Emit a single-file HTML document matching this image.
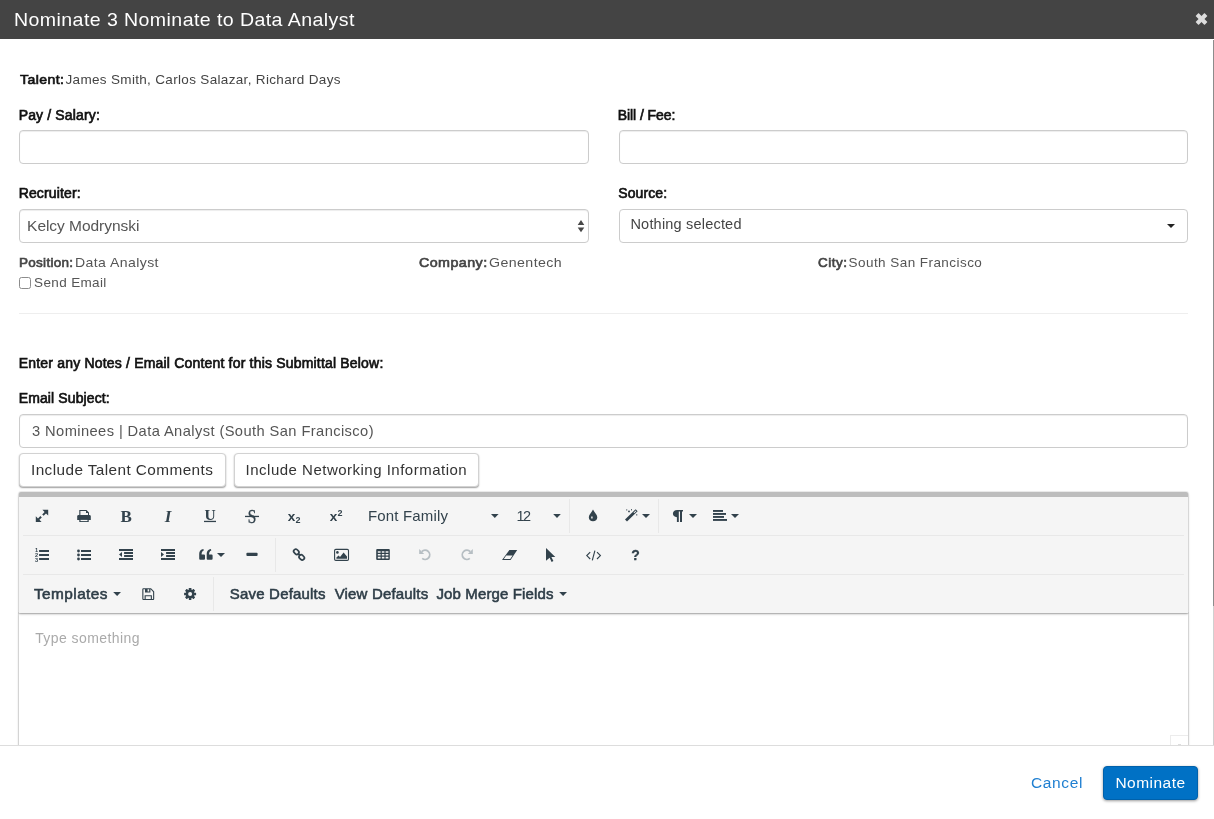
<!DOCTYPE html>
<html lang="en">
<head>
<meta charset="utf-8">
<title>Nominate 3 Nominate to Data Analyst</title>
<style>
html,body{margin:0;padding:0;background:#fff}
body{width:1214px;height:819px;position:relative;overflow:hidden;font-family:"Liberation Sans",sans-serif}
.abs{position:absolute}
.t{position:absolute;white-space:nowrap;line-height:1;will-change:opacity}
.hdr{left:0;top:0;width:1214px;height:39px;background:#444}
.inp{position:absolute;box-sizing:border-box;border:1px solid #ccc;border-radius:4px;background:#fff;box-shadow:inset 0 1px 1px rgba(0,0,0,.075)}
.btn{position:absolute;box-sizing:border-box;border:1px solid #d2d2d2;border-radius:4px;background:#fff;box-shadow:0 1px 1.5px rgba(0,0,0,.38)}
.ic{position:absolute;overflow:visible}
.g{transform:translateX(-50%)}
.sep{position:absolute;background:#e8e8e8}
</style>
</head>
<body>
<div class="abs hdr"></div>
<svg class="ic" style="left:1195px;top:13px" width="12" height="12" viewBox="0 0 12 12"><g fill="#ddd" transform="translate(6.5 6)"><rect x="-6.3" y="-2.1" width="12.6" height="4.2" rx="0.4" transform="rotate(45)"/><rect x="-6.3" y="-2.1" width="12.6" height="4.2" rx="0.4" transform="rotate(-45)"/></g></svg>
<!-- scrollbar -->
<div class="abs" style="left:1213px;top:40px;width:1px;height:566px;background:#8c8c8c"></div>
<div class="abs" style="left:1213px;top:606px;width:1px;height:139px;background:#d0d0d0"></div>

<div class="inp" style="left:19px;top:130px;width:569.5px;height:34px"></div>
<div class="inp" style="left:618.5px;top:130px;width:569.5px;height:34px"></div>
<div class="inp" style="left:19px;top:209px;width:569.5px;height:34px"></div>
<div class="inp" style="left:618.5px;top:209px;width:569.5px;height:34px;box-shadow:none"></div>
<!-- select arrows -->
<svg class="ic" style="left:576.7px;top:219.7px" width="8" height="13" viewBox="0 0 8 13"><path d="M4 0 L7.3 5.1 H0.7 Z M4 12.2 L7.3 7.5 H0.7 Z" fill="#484848"/></svg>
<svg class="ic" style="left:1167px;top:224px" width="8" height="4" viewBox="0 0 8 4"><path d="M0 0 H8 L4 4 Z" fill="#222"/></svg>
<!-- checkbox -->
<div class="abs" style="left:19px;top:277px;width:12px;height:12px;box-sizing:border-box;border:1px solid #8c8c8c;border-radius:2.5px;background:#fff"></div>
<!-- hr -->
<div class="abs" style="left:19px;top:313px;width:1169px;height:1px;background:#eee"></div>
<div class="inp" style="left:19px;top:414px;width:1169px;height:34px"></div>
<div class="btn" style="left:19px;top:453px;width:206.5px;height:34px"></div>
<div class="btn" style="left:234px;top:453px;width:245px;height:34px"></div>

<!-- editor -->
<div class="abs" style="left:19px;top:613px;width:1169px;height:140px;background:#fff;box-shadow:0 1px 3px rgba(0,0,0,.12),0 1px 2px rgba(0,0,0,.24),0 0 0 1px rgba(0,0,0,.06)"></div>
<div class="abs" style="left:19px;top:492px;width:1169px;height:121px;background:#f5f5f5;border-top:5px solid #bdbdbd;border-radius:2px 2px 0 0;box-sizing:border-box;box-shadow:0 1px 3px rgba(0,0,0,.12),0 1px 2px rgba(0,0,0,.24),0 0 0 1px rgba(0,0,0,.06)"></div>
<div class="sep" style="left:23px;top:535px;width:1161px;height:1px"></div>
<div class="sep" style="left:23px;top:574px;width:1161px;height:1px"></div>
<div class="sep" style="left:569px;top:499px;width:1px;height:34px"></div>
<div class="sep" style="left:658px;top:499px;width:1px;height:34px"></div>
<div class="sep" style="left:275px;top:538px;width:1px;height:34px"></div>
<div class="sep" style="left:213px;top:577px;width:1px;height:34px"></div>
<svg class="ic" style="left:0;top:0" width="1214" height="819" viewBox="0 0 1214 819" fill="#32424c">
<!-- row1: expand -->
<path d="M48.2 509.8 V515.6 L46 513.4 L43.6 515.8 L42.2 514.4 L44.6 512 L42.4 509.8 Z M35.8 522 V516.2 L38 518.4 L40.4 516 L41.8 517.4 L39.4 519.8 L41.6 522 Z"/>
<!-- print -->
<path d="M79.3 515 V510 H86.5 L89 512.5 V515 H88 V513 H86 V511 H80.4 V515 Z"/>
<path d="M78.6 515 H89.4 Q90.8 515 90.8 516.4 V520 H77.2 V516.4 Q77.2 515 78.6 515 Z"/>
<path d="M79.3 519 H88.7 V522 H79.3 Z"/><rect x="80.5" y="519.9" width="7" height="1.2" fill="#f5f5f5"/>
<!-- underline bar / strike bar -->
<rect x="204" y="520.8" width="12" height="1.3"/>
<rect x="245" y="515.8" width="14" height="1.3"/>
<!-- carets row1 -->
<path d="M491 514 H498.6 L494.8 518 Z"/>
<path d="M553.2 514 H560.8 L557 518 Z"/>
<path d="M642 514 H650 L646 518 Z"/>
<path d="M689 514 H697 L693 518 Z"/>
<path d="M731 514 H739 L735 518 Z"/>
<!-- tint -->
<path d="M593 509.5 C594.2 512.2 597.3 514.6 597.3 517.2 C597.3 519.6 595.4 521.2 593 521.2 C590.6 521.2 588.8 519.6 588.8 517.2 C588.8 514.6 591.8 512.2 593 509.5 Z M591.2 516.6 V518.6 H592.6 V516.6 Z" fill-rule="evenodd"/>
<!-- magic wand -->
<path d="M625 519.4 L635.6 509.2 L637.6 511.2 L627 521.6 Z"/>
<path d="M633.6 512.6 L635.7 510.6 L636.3 511.2 L634.2 513.2 Z" fill="#f5f5f5"/>
<circle cx="629" cy="511.4" r="0.9"/><rect x="626.4" y="509.2" width="0.8" height="1.4"/><rect x="631" y="509" width="0.8" height="1.4"/><rect x="636.4" y="514" width="0.8" height="1.6"/>
<!-- paragraph -->
<path d="M677.2 510 H683 V511.4 H682 V522 H680 V511.4 H678.8 V522 H676.9 V517.2 C674.4 517.2 672.9 515.6 672.9 513.6 C672.9 511.6 674.6 510 677.2 510 Z"/>
<!-- align -->
<rect x="713" y="510" width="10" height="1.9"/><rect x="713" y="513" width="13" height="1.9"/><rect x="713" y="516" width="11" height="1.9"/><rect x="713" y="519" width="14" height="1.9"/>
<!-- row2: ol -->
<rect x="39.1" y="550" width="9.9" height="2"/><rect x="39.1" y="554" width="9.9" height="2"/><rect x="39.1" y="558" width="9.9" height="2"/>
<!-- ul -->
<circle cx="78.5" cy="551" r="1.4"/><circle cx="78.5" cy="555" r="1.4"/><circle cx="78.5" cy="559" r="1.4"/>
<rect x="81" y="550" width="10" height="2"/><rect x="81" y="554" width="10" height="2"/><rect x="81" y="558" width="10" height="2"/>
<!-- outdent -->
<rect x="119" y="549" width="14" height="2"/><rect x="124.1" y="552" width="8.9" height="2"/><rect x="124.1" y="555" width="8.9" height="2"/><rect x="119" y="558" width="14" height="2"/>
<path d="M119 554.5 L122 552 V557 Z"/>
<!-- indent -->
<rect x="161" y="549" width="14" height="2"/><rect x="166.1" y="552" width="8.9" height="2"/><rect x="166.1" y="555" width="8.9" height="2"/><rect x="161" y="558" width="14" height="2"/>
<path d="M164 554.5 L161 552 V557 Z"/>
<!-- quote -->
<path d="M200.2 559.8 Q199.2 559.8 199.2 558.8 V553.8 C199.2 551 200.8 549.3 203.4 549 L203.8 550.4 C202.2 551 201.6 552.2 201.6 554.4 H204 Q205 554.4 205 555.4 V558.8 Q205 559.8 204 559.8 Z"/>
<path d="M207.7 559.8 Q206.7 559.8 206.7 558.8 V553.8 C206.7 551 208.3 549.3 210.9 549 L211.3 550.4 C209.7 551 209.1 552.2 209.1 554.4 H211.6 Q212.6 554.4 212.6 555.4 V558.8 Q212.6 559.8 211.6 559.8 Z"/>
<path d="M217 553 H225 L221 557 Z"/>
<!-- minus -->
<rect x="246.4" y="552.8" width="11.2" height="3.2" rx="1"/>
<!-- link -->
<g fill="none" stroke="#32424c" stroke-width="1.7">
<rect x="293.5" y="549.7" width="5.6" height="4.2" rx="2" transform="rotate(45 296.3 551.8)"/>
<rect x="298.9" y="555.3" width="5.6" height="4.2" rx="2" transform="rotate(45 301.7 557.4)"/>
<path d="M298 553.5 L300 555.5" stroke-width="2"/>
</g>
<!-- image -->
<rect x="334.6" y="549.4" width="13.9" height="11" rx="1.2" fill="none" stroke="#32424c" stroke-width="1.1"/>
<circle cx="337.4" cy="552.4" r="1.3"/>
<path d="M336.4 558.8 V557.6 L338.6 555.6 L340 557 L343.6 552.6 L347 556.6 V558.8 Z"/>
<!-- table -->
<path d="M377.2 549 H388.8 Q389.8 549 389.8 550 V559 Q389.8 560 388.8 560 H377.2 Q376.2 560 376.2 559 V550 Q376.2 549 377.2 549 Z M377.8 551.2 V552.8 H380.6 V551.2 Z M381.8 551.2 V552.8 H384.4 V551.2 Z M385.6 551.2 V552.8 H388.4 V551.2 Z M377.8 554 V555.6 H380.6 V554 Z M381.8 554 V555.6 H384.4 V554 Z M385.6 554 V555.6 H388.4 V554 Z M377.8 556.8 V558.4 H380.6 V556.8 Z M381.8 556.8 V558.4 H384.4 V556.8 Z M385.6 556.8 V558.4 H388.4 V556.8 Z" fill-rule="evenodd"/>
<!-- undo / redo -->
<g fill="none" stroke="#b6bec3" stroke-width="1.8">
<path d="M421.8 551.6 A4.6 4.6 0 1 1 422.2 558.4"/>
<path d="M470.2 551.6 A4.6 4.6 0 1 0 469.8 558.4"/>
</g>
<path d="M419.2 549 V554 H424.2 Z" fill="#b6bec3"/>
<path d="M472.8 549 V554 H467.8 Z" fill="#b6bec3"/>
<!-- eraser -->
<path d="M509.4 550 H517.2 L510.6 560 H502 Z M506.2 555.4 L503.8 559 H510.2 L512.6 555.4 Z" fill-rule="evenodd"/>
<!-- cursor -->
<path d="M546 548 L555.3 557 H551.4 L553.4 561 L551.6 561.9 L549.6 557.8 L546 560.8 Z"/>
<!-- code -->
<g fill="none" stroke="#32424c" stroke-width="1.15"><path d="M590.2 552.2 L586.8 555.6 L590.2 559"/><path d="M597 552.2 L600.4 555.6 L597 559"/><path d="M594.9 550.6 L592.3 560.4"/></g>
<!-- row3 -->
<path d="M113.2 592 H121 L117.1 596 Z"/>
<path d="M559.2 592 H567 L563.1 596 Z"/>
<!-- save -->
<path d="M143.3 588.2 H151 L154.2 591.4 V599 Q154.2 600 153.2 600 H143.3 Q142.3 600 142.3 599 V589.2 Q142.3 588.2 143.3 588.2 Z M143.4 589.3 V598.9 H144.6 V595.2 H151.9 V598.9 H153.1 V591.9 L150.6 589.3 H150.4 V592.6 H145 V589.3 Z M145.7 596.2 V598.9 H150.8 V596.2 Z M147.6 589.3 V591.6 H149.2 V589.3 Z" fill-rule="evenodd"/>
<!-- gear -->
<g transform="translate(190.1 594)">
<circle r="4.4"/>
<g><rect x="-1.3" y="-6" width="2.6" height="12" rx="0.4"/><rect x="-1.3" y="-6" width="2.6" height="12" rx="0.4" transform="rotate(45)"/><rect x="-1.3" y="-6" width="2.6" height="12" rx="0.4" transform="rotate(90)"/><rect x="-1.3" y="-6" width="2.6" height="12" rx="0.4" transform="rotate(135)"/></g>
<circle r="2" fill="#f5f5f5"/>
</g>
</svg>

<!-- small box bottom right of editor -->
<div class="abs" style="left:1170px;top:735px;width:18px;height:12px;box-sizing:border-box;border:1px solid #ececec;border-right:0;background:#fff"></div>
<div class="abs" style="left:1177.5px;top:743.5px;width:3.5px;height:1.5px;background:#ddd"></div>
<!-- footer -->
<div class="abs" style="left:0;top:745px;width:1214px;height:74px;background:#fff;border-top:1px solid #ddd;box-sizing:border-box"></div>
<div class="abs" style="left:1103px;top:766px;width:95px;height:34px;border-radius:4px;background:#0071c5;border:1px solid #0061ab;box-sizing:border-box;box-shadow:0 1px 3px rgba(0,0,0,.4)"></div>
<span class="t" id="title" style="left:14.41px;top:10.74px;font-size:18.5px;font-weight:400;color:#fff;font-family:'Liberation Sans', sans-serif;letter-spacing:0.400px;transform:scaleX(1.0566);transform-origin:0 0">Nominate 3 Nominate to Data Analyst</span>
<span class="t" id="talent_l" style="left:19.80px;top:72.77px;font-size:13.5px;font-weight:400;color:#111;font-family:'Liberation Sans', sans-serif;letter-spacing:0.400px;-webkit-text-stroke:0.65px #111;transform:scaleX(1.0399);transform-origin:0 0">Talent:</span>
<span class="t" id="talent_v" style="left:65.49px;top:72.77px;font-size:13.5px;font-weight:400;color:#444;font-family:'Liberation Sans', sans-serif;letter-spacing:0.329px">James Smith, Carlos Salazar, Richard Days</span>
<span class="t" id="pay" style="left:18.71px;top:107.95px;font-size:14px;font-weight:400;color:#111;font-family:'Liberation Sans', sans-serif;letter-spacing:0.143px;-webkit-text-stroke:0.65px #111">Pay / Salary:</span>
<span class="t" id="bill" style="left:617.81px;top:107.95px;font-size:14px;font-weight:400;color:#111;font-family:'Liberation Sans', sans-serif;letter-spacing:-0.079px;-webkit-text-stroke:0.65px #111">Bill / Fee:</span>
<span class="t" id="rec" style="left:18.71px;top:186.45px;font-size:14px;font-weight:400;color:#111;font-family:'Liberation Sans', sans-serif;letter-spacing:0.135px;-webkit-text-stroke:0.65px #111">Recruiter:</span>
<span class="t" id="src" style="left:618.20px;top:186.45px;font-size:14px;font-weight:400;color:#111;font-family:'Liberation Sans', sans-serif;letter-spacing:0.107px;-webkit-text-stroke:0.65px #111">Source:</span>
<span class="t" id="kelcy" style="left:27.10px;top:218.08px;font-size:15.5px;font-weight:400;color:#555;font-family:'Liberation Sans', sans-serif;letter-spacing:-0.041px">Kelcy Modrynski</span>
<span class="t" id="nothing" style="left:630.46px;top:217.33px;font-size:14.5px;font-weight:400;color:#444;font-family:'Liberation Sans', sans-serif;letter-spacing:0.199px">Nothing selected</span>
<span class="t" id="pos_l" style="left:18.93px;top:255.77px;font-size:13.5px;font-weight:400;color:#444;font-family:'Liberation Sans', sans-serif;letter-spacing:0.301px;-webkit-text-stroke:0.65px #444">Position:</span>
<span class="t" id="pos_v" style="left:75.19px;top:255.77px;font-size:13.5px;font-weight:400;color:#555;font-family:'Liberation Sans', sans-serif;letter-spacing:0.400px;transform:scaleX(1.0412);transform-origin:0 0">Data Analyst</span>
<span class="t" id="com_l" style="left:419.11px;top:255.77px;font-size:13.5px;font-weight:400;color:#444;font-family:'Liberation Sans', sans-serif;letter-spacing:0.400px;-webkit-text-stroke:0.65px #444;transform:scaleX(1.0590);transform-origin:0 0">Company:</span>
<span class="t" id="com_v" style="left:488.83px;top:255.77px;font-size:13.5px;font-weight:400;color:#555;font-family:'Liberation Sans', sans-serif;letter-spacing:0.400px;transform:scaleX(1.0503);transform-origin:0 0">Genentech</span>
<span class="t" id="city_l" style="left:817.89px;top:255.77px;font-size:13.5px;font-weight:400;color:#444;font-family:'Liberation Sans', sans-serif;letter-spacing:0.503px;-webkit-text-stroke:0.65px #444">City:</span>
<span class="t" id="city_v" style="left:848.55px;top:255.77px;font-size:13.5px;font-weight:400;color:#555;font-family:'Liberation Sans', sans-serif;letter-spacing:0.444px">South San Francisco</span>
<span class="t" id="send" style="left:34.12px;top:275.97px;font-size:13.5px;font-weight:400;color:#555;font-family:'Liberation Sans', sans-serif;letter-spacing:0.353px">Send Email</span>
<span class="t" id="enter" style="left:18.71px;top:356.45px;font-size:14px;font-weight:400;color:#111;font-family:'Liberation Sans', sans-serif;letter-spacing:0.188px;-webkit-text-stroke:0.65px #111">Enter any Notes / Email Content for this Submittal Below:</span>
<span class="t" id="subj_l" style="left:18.71px;top:391.45px;font-size:14px;font-weight:400;color:#111;font-family:'Liberation Sans', sans-serif;letter-spacing:0.118px;-webkit-text-stroke:0.65px #111">Email Subject:</span>
<span class="t" id="subj_v" style="left:32.24px;top:424.03px;font-size:14.5px;font-weight:400;color:#555;font-family:'Liberation Sans', sans-serif;letter-spacing:0.400px;transform:scaleX(1.0127);transform-origin:0 0">3 Nominees | Data Analyst (South San Francisco)</span>
<span class="t" id="btn1" style="left:30.76px;top:462.20px;font-size:15px;font-weight:400;color:#333;font-family:'Liberation Sans', sans-serif;letter-spacing:0.400px;transform:scaleX(1.0232);transform-origin:0 0">Include Talent Comments</span>
<span class="t" id="btn2" style="left:245.61px;top:462.20px;font-size:15px;font-weight:400;color:#333;font-family:'Liberation Sans', sans-serif;letter-spacing:0.492px">Include Networking Information</span>
<span class="t" id="ff" style="left:368.04px;top:508.40px;font-size:15px;font-weight:400;color:#33434d;font-family:'Liberation Sans', sans-serif;letter-spacing:0.158px">Font Family</span>
<span class="t" id="fs" style="left:516.50px;top:508.83px;font-size:14.5px;font-weight:400;color:#33434d;font-family:'Liberation Sans', sans-serif;letter-spacing:-1.500px">12</span>
<span class="t" id="tpl" style="left:33.73px;top:586.40px;font-size:15px;font-weight:400;color:#2e3d47;font-family:'Liberation Sans', sans-serif;letter-spacing:0.400px;-webkit-text-stroke:0.55px #2e3d47;transform:scaleX(1.0266);transform-origin:0 0">Templates</span>
<span class="t" id="sd" style="left:229.81px;top:586.40px;font-size:15px;font-weight:400;color:#2e3d47;font-family:'Liberation Sans', sans-serif;letter-spacing:0.191px;-webkit-text-stroke:0.55px #2e3d47">Save Defaults</span>
<span class="t" id="vd" style="left:334.68px;top:586.40px;font-size:15px;font-weight:400;color:#2e3d47;font-family:'Liberation Sans', sans-serif;letter-spacing:0.175px;-webkit-text-stroke:0.55px #2e3d47">View Defaults</span>
<span class="t" id="jm" style="left:436.49px;top:586.40px;font-size:15px;font-weight:400;color:#2e3d47;font-family:'Liberation Sans', sans-serif;letter-spacing:0.123px;-webkit-text-stroke:0.55px #2e3d47">Job Merge Fields</span>
<span class="t" id="ph" style="left:35.15px;top:631.45px;font-size:14px;font-weight:400;color:#aaa;font-family:'Liberation Sans', sans-serif;letter-spacing:0.428px">Type something</span>
<span class="t" id="cancel" style="left:1031.00px;top:774.88px;font-size:15.5px;font-weight:400;color:#1f7fd1;font-family:'Liberation Sans', sans-serif;letter-spacing:0.639px">Cancel</span>
<span class="t" id="nom" style="left:1115.39px;top:774.88px;font-size:15.5px;font-weight:400;color:#fff;font-family:'Liberation Sans', sans-serif;letter-spacing:0.490px">Nominate</span>
<span class="t g" id="gB" style="left:126.10px;top:507.80px;font-size:17px;font-weight:700;font-style:normal;color:#32424c;font-family:'Liberation Serif', serif">B</span>
<span class="t g" id="gI" style="left:168.00px;top:507.80px;font-size:17px;font-weight:700;font-style:italic;color:#32424c;font-family:'Liberation Serif', serif">I</span>
<span class="t g" id="gU" style="left:210.00px;top:507.35px;font-size:15.5px;font-weight:700;font-style:normal;color:#32424c;font-family:'Liberation Serif', serif">U</span>
<span class="t g" id="gS" style="left:251.80px;top:507.96px;font-size:18px;font-weight:400;font-style:normal;color:#32424c;font-family:'Liberation Serif', serif;-webkit-text-stroke:0.35px #32424c;transform:translateX(-50%) scaleX(0.85)">S</span>
<span class="t g" id="gx1" style="left:291.50px;top:509.57px;font-size:13.5px;font-weight:700;font-style:normal;color:#32424c;font-family:'Liberation Sans', sans-serif">x</span>
<span class="t g" id="gx1s" style="left:298.00px;top:516.38px;font-size:9px;font-weight:700;font-style:normal;color:#32424c;font-family:'Liberation Sans', sans-serif">2</span>
<span class="t g" id="gx2" style="left:333.50px;top:509.57px;font-size:13.5px;font-weight:700;font-style:normal;color:#32424c;font-family:'Liberation Sans', sans-serif">x</span>
<span class="t g" id="gx2s" style="left:340.10px;top:508.78px;font-size:9px;font-weight:700;font-style:normal;color:#32424c;font-family:'Liberation Sans', sans-serif">2</span>
<span class="t g" id="gq" style="left:635.50px;top:548.30px;font-size:14px;font-weight:700;font-style:normal;color:#32424c;font-family:'Liberation Sans', sans-serif;-webkit-text-stroke:0.3px #32424c">?</span>
<span class="t g" id="gn1" style="left:36.50px;top:548.36px;font-size:5.6px;font-weight:700;font-style:normal;color:#32424c;font-family:'Liberation Sans', sans-serif">1</span>
<span class="t g" id="gn2" style="left:36.50px;top:553.36px;font-size:5.6px;font-weight:700;font-style:normal;color:#32424c;font-family:'Liberation Sans', sans-serif">2</span>
<span class="t g" id="gn3" style="left:36.50px;top:558.36px;font-size:5.6px;font-weight:700;font-style:normal;color:#32424c;font-family:'Liberation Sans', sans-serif">3</span>
</body>
</html>
